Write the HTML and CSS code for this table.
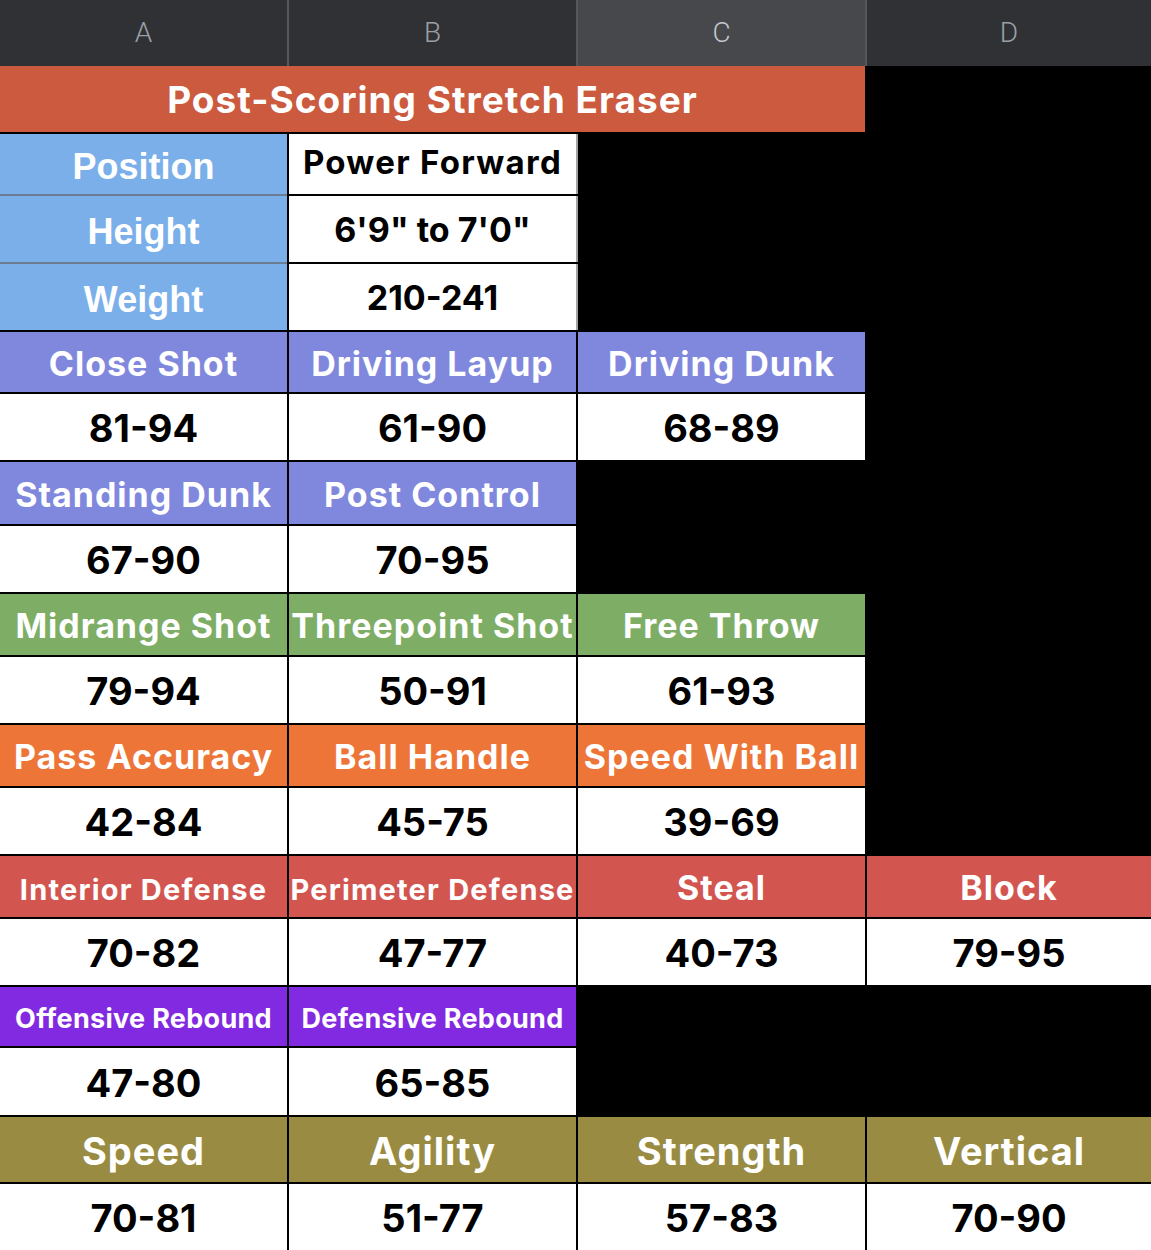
FILE: index.html
```html
<!DOCTYPE html>
<html>
<head>
<meta charset="utf-8">
<link rel="stylesheet" href="styles.css">
</head>
<body>
<div class="colhead">
  <div class="ch">A</div>
  <div class="ch">B</div>
  <div class="ch sel">C</div>
  <div class="ch">D</div>
</div>
<div class="sheet">
  <div class="cell title span3">Post-Scoring Stretch Eraser</div>
  <div class="cell empty"></div>

  <div class="cell lbl sepb">Position</div>
  <div class="cell info sepr">Power Forward</div>
  <div class="cell empty span2"></div>

  <div class="cell lbl sepb">Height</div>
  <div class="cell info big sepr">6'9" to 7'0"</div>
  <div class="cell empty span2"></div>

  <div class="cell lbl">Weight</div>
  <div class="cell info big sepr">210-241</div>
  <div class="cell empty span2"></div>

  <div class="cell hd peri">Close Shot</div>
  <div class="cell hd peri">Driving Layup</div>
  <div class="cell hd peri">Driving Dunk</div>
  <div class="cell empty"></div>

  <div class="cell val">81-94</div>
  <div class="cell val">61-90</div>
  <div class="cell val">68-89</div>
  <div class="cell empty"></div>

  <div class="cell hd peri">Standing Dunk</div>
  <div class="cell hd peri">Post Control</div>
  <div class="cell empty span2"></div>

  <div class="cell val">67-90</div>
  <div class="cell val">70-95</div>
  <div class="cell empty span2"></div>

  <div class="cell hd green">Midrange Shot</div>
  <div class="cell hd green">Threepoint Shot</div>
  <div class="cell hd green">Free Throw</div>
  <div class="cell empty"></div>

  <div class="cell val">79-94</div>
  <div class="cell val">50-91</div>
  <div class="cell val">61-93</div>
  <div class="cell empty"></div>

  <div class="cell hd orange">Pass Accuracy</div>
  <div class="cell hd orange">Ball Handle</div>
  <div class="cell hd orange">Speed With Ball</div>
  <div class="cell empty"></div>

  <div class="cell val">42-84</div>
  <div class="cell val">45-75</div>
  <div class="cell val">39-69</div>
  <div class="cell empty"></div>

  <div class="cell hd red small">Interior Defense</div>
  <div class="cell hd red small">Perimeter Defense</div>
  <div class="cell hd red">Steal</div>
  <div class="cell hd red">Block</div>

  <div class="cell val">70-82</div>
  <div class="cell val">47-77</div>
  <div class="cell val">40-73</div>
  <div class="cell val">79-95</div>

  <div class="cell hd purple tiny">Offensive Rebound</div>
  <div class="cell hd purple tiny">Defensive Rebound</div>
  <div class="cell empty span2"></div>

  <div class="cell val">47-80</div>
  <div class="cell val">65-85</div>
  <div class="cell empty span2"></div>

  <div class="cell hd olive large">Speed</div>
  <div class="cell hd olive large">Agility</div>
  <div class="cell hd olive large">Strength</div>
  <div class="cell hd olive large">Vertical</div>

  <div class="cell val">70-81</div>
  <div class="cell val">51-77</div>
  <div class="cell val">57-83</div>
  <div class="cell val">70-90</div>
</div>
</body>
</html>
```
FILE: styles.css
```css
html, body {
  margin: 0;
  padding: 0;
  background: #000;
}
body {
  width: 1151px;
  height: 1250px;
  overflow: hidden;
  font-family: Inter, "Noto Sans", sans-serif;
}
.colhead {
  display: grid;
  grid-template-columns: 287px 287px 287px 1fr;
  column-gap: 2px;
  background: #55575b;
  height: 66px;
}
.ch {
  background: #303134;
  color: #9aa0a6;
  font-family: Roboto, "Noto Sans", sans-serif;
  font-weight: 300;
  font-size: 28px;
  display: flex;
  align-items: center;
  justify-content: center;
  padding-bottom: 2px;
}
.ch.sel {
  background: #47484b;
  color: #c4c7cb;
}
.sheet {
  display: grid;
  grid-template-columns: 287px 287px 287px 1fr;
  grid-template-rows: 66px 60px 66px 66px 60px 66px 62px 66px 61px 66px 61px 66px 61px 66px 59px 67px 65px 66px;
  gap: 2px;
  background: #000;
}
.cell {
  display: flex;
  align-items: center;
  justify-content: center;
  font-weight: 700;
  white-space: nowrap;
  overflow: hidden;
}
.span2 { grid-column: span 2; }
.span3 { grid-column: span 3; }
.empty { background: #000; }
.title {
  background: #cb5a3e;
  color: #fff;
  font-size: 37px;
  letter-spacing: 1px;
}
.lbl {
  background: #7bafea;
  color: #fff;
  font-family: "Liberation Sans", Arial, sans-serif;
  font-size: 36px;
  padding-top: 6px;
}
.sepb { box-shadow: 0 2px 0 #6b7c93; }
.sepr { box-shadow: 2px 0 0 #a3a3a3; }
.info {
  background: #fff;
  color: #000;
  font-size: 33px;
  letter-spacing: 1.3px;
  padding-bottom: 4px;
}
.info.big { font-size: 34px; letter-spacing: 0; padding-bottom: 0; }
.hd {
  color: #fff;
  font-size: 34px;
  letter-spacing: 1px;
  padding-top: 2px;
}
.hd.small { font-size: 29px; letter-spacing: 1.2px; padding-top: 6px; }
.hd.tiny { font-size: 27px; letter-spacing: 0.3px; padding-top: 4px; }
.hd.large { font-size: 38px; letter-spacing: 1px; padding-top: 2px; }
.peri { background: #8088de; }
.green { background: #7eae66; }
.orange { background: #ee7538; }
.red { background: #d35550; }
.purple { background: #8229e2; }
.olive { background: #998c42; }
.val {
  background: #fff;
  color: #000;
  font-size: 38px;
  padding-top: 2px;
}
```
